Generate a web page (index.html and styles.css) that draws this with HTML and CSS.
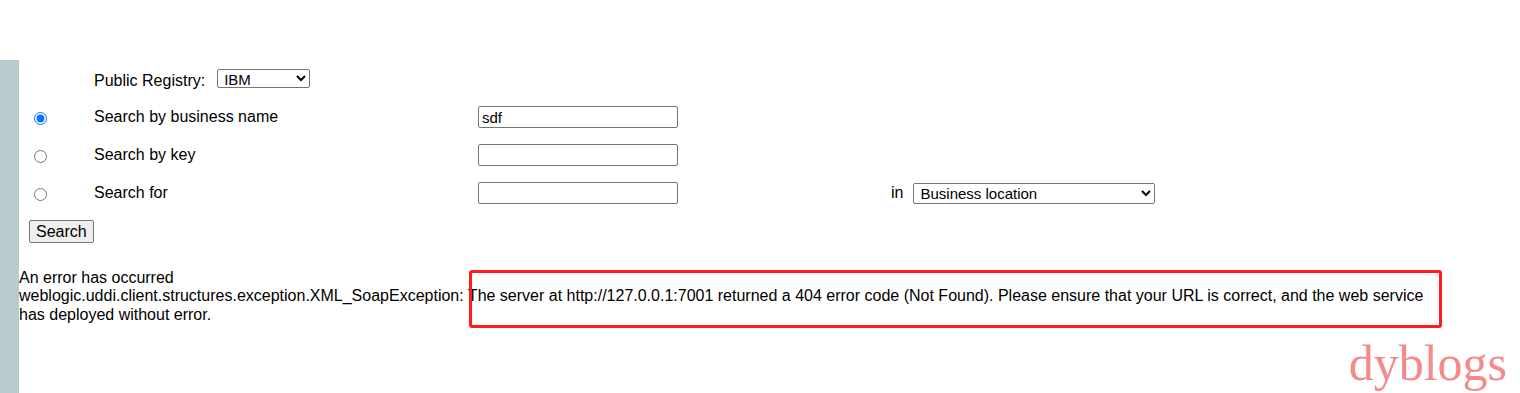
FILE: index.html
```html
<!DOCTYPE html>
<html lang="en">
<head>
  <meta charset="UTF-8" />
  <meta name="viewport" content="width=device-width, initial-scale=1.0" />
  <title>UDDI Explorer - Search</title>
  <link rel="stylesheet" href="styles.css">
</head>
<body>
  <div class="page">
    <div class="side"></div>

    <div class="main">
      <form class="search-form" onsubmit="return false">
        <div class="grid">
          <!-- registry row -->
          <div></div>
          <div class="registry">
            <span class="registry-label">Public Registry:</span>
            <select class="registry-select">
              <option>IBM</option>
              <option>Microsoft</option>
              <option>SAP</option>
            </select>
          </div>
          <div></div>
          <div></div>

          <!-- search modes -->
          <div><input type="radio" name="mode" checked></div>
          <div class="label">Search by business name</div>
          <div><input type="text" class="field" value="sdf"></div>
          <div></div>

          <div><input type="radio" name="mode"></div>
          <div class="label">Search by key</div>
          <div><input type="text" class="field"></div>
          <div></div>

          <div><input type="radio" name="mode"></div>
          <div class="label">Search for</div>
          <div><input type="text" class="field"></div>
          <div class="in-cell">
            <span>in</span>
            <select class="in-select">
              <option>Business location</option>
              <option>Business category</option>
              <option>Service type</option>
            </select>
          </div>
        </div>

        <button type="submit" class="search-btn">Search</button>
      </form>

      <div class="error">
        An error has occurred<br>
        weblogic.uddi.client.structures.exception.XML_SoapException: The server at http://127.0.0.1:7001 returned a 404 error code (Not Found). Please ensure that your URL is correct, and the web service has deployed without error.
        <div class="mark-box"></div>
      </div>
    </div>
  </div>

  <div class="watermark">dyblogs</div>
</body>
</html>
```

FILE: styles.css
```css
body {
  margin: 0;
  font-family: 'Liberation Sans', Arial, sans-serif;
  font-size: 16px;
  color: #000;
  background: #fff;
}

.page {
  display: flex;
  padding-top: 60px;
  height: 333px;
}

.side {
  width: 19px;
  background-color: #b8cbcd;
}

.main {
  flex: 1;
}

.search-form {
  padding-left: 10px;
}

.grid {
  display: grid;
  grid-template-columns: 65px 384px 413px auto;
  grid-auto-rows: 38px;
  align-items: center;
}

.grid > div {
  display: flex;
  align-items: center;
}

.registry {
  gap: 12px;
}

.registry-label {
  padding-top: 3px;
}

.label {
  padding-bottom: 1px;
}

input[type="radio"] {
  width: 13px;
  height: 13px;
  margin: 3px 0 0 5px;
}

.field {
  box-sizing: border-box;
  width: 200px;
  height: 22px;
  padding: 1px 3px;
  border: 1px solid #767676;
  border-radius: 2px;
  font-family: 'Liberation Sans', Arial, sans-serif;
  font-size: 15px;
}

select {
  box-sizing: border-box;
  font-family: 'Liberation Sans', Arial, sans-serif;
  font-size: 15px;
  border: 1px solid #767676;
  border-radius: 2px;
  background: #fff;
  color: #000;
}

.registry-select {
  width: 93px;
  height: 19px;
  padding: 0 2px;
  margin-top: -2px;
}

.in-cell {
  gap: 10px;
}

.in-select {
  width: 242px;
  height: 21px;
  padding: 0 2px;
}

.search-btn {
  display: block;
  box-sizing: border-box;
  margin-top: 8px;
  height: 23px;
  padding: 1px 6px;
  font-family: 'Liberation Sans', Arial, sans-serif;
  font-size: 16px;
  background-color: #efefef;
  border: 1px solid #767676;
  border-radius: 2px;
  color: #000;
}

.error {
  position: relative;
  width: 1426px;
  margin-top: 26px;
  line-height: 18.4px;
}

.mark-box {
  position: absolute;
  left: 450px;
  top: 1px;
  width: 967px;
  height: 52px;
  border: 3px solid #ff1c1c;
  border-radius: 3px;
}

.watermark {
  position: absolute;
  top: 338px;
  right: 13px;
  font-family: 'Liberation Serif', 'Times New Roman', serif;
  font-size: 50px;
  line-height: 50px;
  color: #f48a8a;
}
```
